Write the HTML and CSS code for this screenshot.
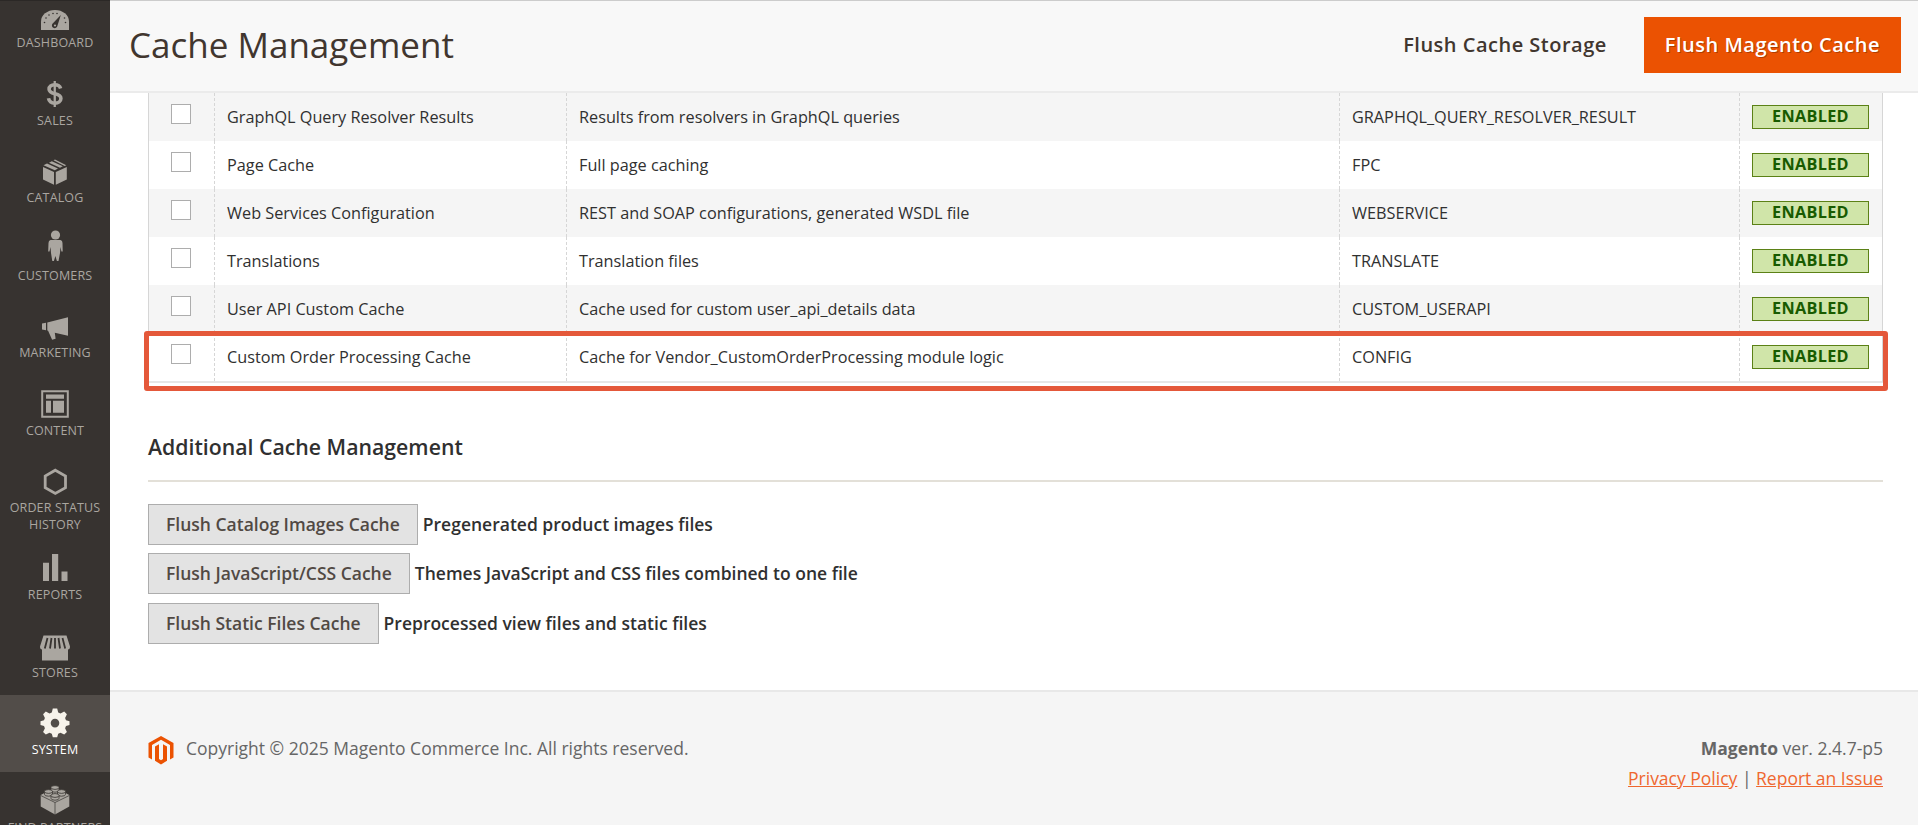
FILE: index.html
```html
<!DOCTYPE html>
<html lang="en">
<head>
<meta charset="utf-8">
<title>Cache Management</title>
<link rel="stylesheet" href="styles.css">
</head>
<body>
<div class="app">
<nav class="menu">
  <a class="item"><svg class="icon" viewBox="0 0 32 34"><path d="M2 30V21.500a14 11.500 0 0 1 28 0v8.500z"/><g class="cut"><circle cx="5.500" cy="22.500" r=".8"/><circle cx="7" cy="18" r=".8"/><circle cx="10" cy="15" r=".8"/><circle cx="14" cy="13.500" r=".8"/><circle cx="18" cy="13.500" r=".8"/><circle cx="26.500" cy="22.500" r=".8"/><circle cx="25.500" cy="18" r=".8"/><path d="M21.800 15l-7.600 8a2.800 2.800 0 1 0 4.300 2.500z"/></g><circle cx="16" cy="25.500" r="1.100"/></svg><span class="label">Dashboard</span></a>
  <a class="item"><svg class="icon" viewBox="0 0 32 34"><path class="stroke" d="M21.600 11.500C20.800 8.800 18.600 7.800 15.600 7.800c-3.200 0-5.500 1.600-5.500 4.400 0 6.200 11.800 3 11.800 9.200 0 3-2.600 4.700-6 4.700-3.600 0-5.800-1.600-6.400-4.900" stroke-width="3.600"/><path d="M14.600 4h2.300v26h-2.300z"/></svg><span class="label">Sales</span></a>
  <a class="item"><svg class="icon" viewBox="0 0 32 34"><path d="M4 12l11 5v12.800L4 24.500zM16.800 17l11-5v12.500l-11 5.300zM4.500 10.300L8 8.600l11 5-3.200 1.700zM10 7.700l2.800-1.400 11 5-2.800 1.400zM14.500 5.300L16 4.500l11.300 5.800-1.700.8z"/></svg><span class="label">Catalog</span></a>
  <a class="item"><svg class="icon" viewBox="0 0 32 34"><circle cx="16.500" cy="3" r="4.600"/><path d="M11.500 8h10q2 .5 2 3l.2 8.500h-1.300L21.500 15l-.5 6-1.500 8h-1.600l-1.500-5-1.500 5h-1.600L12 21l-.5-6-1 4.500H9.200L9.500 11q0-2.500 2-3z"/></svg><span class="label">Customers</span></a>
  <a class="item"><svg class="icon" viewBox="0 0 32 34"><path d="M3 13.500l4-.8v7.500l-4-.8zM8.300 12.400L29 7.300v18.400l-13.200-3 .8 6-3.500 1-4-9-.8-.3z"/></svg><span class="label">Marketing</span></a>
  <a class="item"><svg class="icon" viewBox="0 0 32 34"><path class="stroke" d="M3.200 4.200h25.600v25.600H3.200z" stroke-width="2"/><path d="M7 7.500h18v4.300H7zM7 13.800h5v12H7zM14 13.800h11v12H14z"/></svg><span class="label">Content</span></a>
  <a class="item tall"><svg class="icon" viewBox="0 0 32 34"><path class="stroke" d="M16.300 5.200L26.500 11v11.600l-10.200 5.900L6.200 22.600V11z" stroke-width="2.800"/></svg><span class="label">Order Status<br>History</span></a>
  <a class="item"><svg class="icon" viewBox="0 0 32 34"><path d="M4 10.800h6V29H4zM13 2h6.200v27H13zM22.500 19.500h6V29h-6z"/></svg><span class="label">Reports</span></a>
  <a class="item"><svg class="icon" viewBox="0 0 32 34"><path d="M4.500 6.500h23L31 17.500q0 3-2 3v11H3v-11q-2 0-2-3z"/><path class="slits" d="M8.500 9L5.800 19.500M12.500 9l-1.500 10.500M16 9v10.500M19.500 9l1.500 10.500M23.500 9l2.700 10.500"/></svg><span class="label">Stores</span></a>
  <a class="item active"><svg class="icon" viewBox="0 0 32 34"><path fill-rule="evenodd" d="M13.800 1.500h4.400l1 4 2.300.9 3.700-1.800 2.700 2.700-1.800 3.700.9 2.300 3.500 1v3.600l-3.500 1-.9 2.300 1.800 3.700-2.700 2.700-3.700-1.800-2.300.9-1 3.600h-4.400l-1-3.600-2.300-.9-3.700 1.800-2.700-2.700 1.800-3.700-.9-2.300-3.500-1v-3.600l3.500-1 .9-2.300-1.800-3.700 2.700-2.700 3.700 1.800 2.300-.9zM16 11.800a4.300 4.300 0 1 0 0 8.600 4.300 4.300 0 0 0 0-8.600z"/></svg><span class="label">System</span></a>
  <a class="item"><svg class="icon" viewBox="0 0 32 34"><path d="M1.700 11L16 3.500 30.300 11v11.500L16 30.500 1.700 22.500z"/><path class="seam" d="M1.700 11.500L16 18.500l14.300-7M16 18.500v12"/><g class="stud"><path d="M12 3.500v2.800a4 1.900 0 0 0 8 0V3.500M5.500 7.500v2.800a4 1.900 0 0 0 8 0V7.500M18.500 7.500v2.800a4 1.900 0 0 0 8 0V7.500M12 11.500v2.800a4 1.900 0 0 0 8 0V11.500"/><ellipse cx="16" cy="3.500" rx="4" ry="1.900"/><ellipse cx="9.500" cy="7.500" rx="4" ry="1.900"/><ellipse cx="22.500" cy="7.500" rx="4" ry="1.900"/><ellipse cx="16" cy="11.500" rx="4" ry="1.900"/></g></svg><span class="label">Find Partners</span></a>
</nav>
<div class="page">
  <header class="header">
    <h1 class="title">Cache Management</h1>
    <button class="btn-link">Flush Cache Storage</button>
    <button class="btn-primary">Flush Magento Cache</button>
  </header>
  <main class="main">
    <div class="grid-wrap">
    <div class="grid">
      <div class="row"><div class="cell"><i class="check"></i></div><div class="cell">GraphQL Query Resolver Results</div><div class="cell">Results from resolvers in GraphQL queries</div><div class="cell">GRAPHQL_QUERY_RESOLVER_RESULT</div><div class="cell"><span class="badge">Enabled</span></div></div>
      <div class="row"><div class="cell"><i class="check"></i></div><div class="cell">Page Cache</div><div class="cell">Full page caching</div><div class="cell">FPC</div><div class="cell"><span class="badge">Enabled</span></div></div>
      <div class="row"><div class="cell"><i class="check"></i></div><div class="cell">Web Services Configuration</div><div class="cell">REST and SOAP configurations, generated WSDL file</div><div class="cell">WEBSERVICE</div><div class="cell"><span class="badge">Enabled</span></div></div>
      <div class="row"><div class="cell"><i class="check"></i></div><div class="cell">Translations</div><div class="cell">Translation files</div><div class="cell">TRANSLATE</div><div class="cell"><span class="badge">Enabled</span></div></div>
      <div class="row"><div class="cell"><i class="check"></i></div><div class="cell">User API Custom Cache</div><div class="cell">Cache used for custom user_api_details data</div><div class="cell">CUSTOM_USERAPI</div><div class="cell"><span class="badge">Enabled</span></div></div>
      <div class="row"><div class="cell"><i class="check"></i></div><div class="cell">Custom Order Processing Cache</div><div class="cell">Cache for Vendor_CustomOrderProcessing module logic</div><div class="cell">CONFIG</div><div class="cell"><span class="badge">Enabled</span></div></div>
    </div>
    <div class="highlight"></div>
    </div>
    <h2 class="subtitle">Additional Cache Management</h2>
    <div class="actions">
      <p class="action"><button class="btn">Flush Catalog Images Cache</button><span>Pregenerated product images files</span></p>
      <p class="action"><button class="btn">Flush JavaScript/CSS Cache</button><span>Themes JavaScript and CSS files combined to one file</span></p>
      <p class="action"><button class="btn">Flush Static Files Cache</button><span>Preprocessed view files and static files</span></p>
    </div>
  </main>
  <footer class="footer">
    <svg class="logo" viewBox="0 0 26 30"><path d="M13 1l12.500 7v14.500L22 24.500V10l-9-5.200L4 10v14.500L.5 22.500V8z"/><path d="M7 11.500l4-2.200v14.800l2 1.200 2-1.200V9.300l4 2.200v14.300L13 29.500l-6-3.700z"/></svg>
    <p class="copy">Copyright © 2025 Magento Commerce Inc. All rights reserved.</p>
    <div class="legal"><p class="line"><strong>Magento</strong> ver. 2.4.7-p5</p><p class="line"><a class="link">Privacy Policy</a> | <a class="link">Report an Issue</a></p></div>
  </footer>
</div>
</div>
</body>
</html>
```

FILE: styles.css
```css
* { box-sizing: border-box; }
body {
  margin: 0;
  background: #fff;
  color: #303030;
  font-family: "Open Sans", "Noto Sans", sans-serif;
  font-size: 16.25px;
}
h1, h2, p { margin: 0; }
button { font-family: inherit; }
.app { display: flex; height: 825px; overflow: hidden; }

.menu {
  flex: none;
  width: 110px;
  height: 825px;
  overflow: hidden;
  background: #373330;
  box-shadow: inset 0 1px 0 #2b2826;
}
.item {
  display: flex;
  flex-direction: column;
  align-items: center;
  height: 77.5px;
  padding-top: 12px;
  color: #aaa6a0;
  font-size: 12.5px;
  line-height: 17px;
  letter-spacing: .15px;
  text-align: center;
  text-transform: uppercase;
}
.item:first-child { margin-top: -12.5px; }
.item.tall { height: 87px; }
.item.active {
  background: #524d49;
  color: #fff;
}
.icon { flex: none; width: 32px; height: 34px; margin-bottom: .6px; overflow: visible; fill: currentColor; }
.active .icon { color: #f7f3eb; }
.cut { fill: #373330; }
.stroke { fill: none; stroke: currentColor; }
.slits { fill: none; stroke: #373330; stroke-width: 1.8; }
.seam { fill: none; stroke: #373330; stroke-width: .7; }
.stud { stroke: #373330; stroke-width: .8; }
.label { white-space: nowrap; }

.page { flex: 1; display: flex; flex-direction: column; }
.header {
  display: flex;
  align-items: center;
  height: 93px;
  padding: 0 17px 3px 19px;
  background: #f8f8f8;
  border-top: 1px solid #ccc;
  border-bottom: 2px solid #ebebeb;
}
.title {
  flex: 1;
  color: #41362f;
  font-size: 35px;
  font-weight: 400;
  line-height: 42px;
}
.btn-link, .btn-primary {
  height: 56px;
  border: 0;
  padding: 0 21px;
  font-size: 20px;
  font-weight: 600;
  letter-spacing: .5px;
}
.btn-link { margin-right: 16px; background: transparent; color: #41362f; }
.btn-primary { background: #eb5202; color: #fff; text-shadow: 1px 1px 0 rgba(0, 0, 0, .25); }

.main { padding: 0 35px 0 38px; }
.grid-wrap { position: relative; }
.grid {
  border: 1px solid #d6d6d6;
  border-top: 0;
  border-bottom: 2px solid #e6e6e6;
}
.row {
  display: grid;
  grid-template-columns: 65px 352px 773px 400px 1fr;
  height: 48.15px;
}
.row:first-child { height: 47.6px; }
.row:first-child .cell { padding-top: 11.5px; }
.row:nth-child(odd) { background: #f5f5f5; }
.cell { padding: 12px 12px 0; line-height: 24px; white-space: nowrap; }
.cell + .cell { border-left: 1px dashed #d6d6d6; }
.check {
  display: block;
  width: 20px;
  height: 20px;
  margin: -1px 0 0 10px;
  border: 1px solid #adadad;
  background: #fff;
}
.badge {
  display: block;
  width: 117px;
  height: 24px;
  border: 1px solid #5b8116;
  background: #d0e5a9;
  color: #185b00;
  font-weight: 700;
  line-height: 21px;
  letter-spacing: .3px;
  text-align: center;
  text-transform: uppercase;
}
.highlight {
  position: absolute;
  left: -4px;
  right: -5px;
  bottom: -8px;
  height: 60px;
  border: 5px solid #e4583a;
  border-radius: 3px;
}
.subtitle {
  margin-top: 48px;
  padding-bottom: 16.5px;
  border-bottom: 2px solid #e3e0d8;
  font-size: 21.25px;
  font-weight: 600;
  line-height: 32px;
}
.actions { padding-top: 22px; }
.action {
  display: flex;
  align-items: center;
  gap: 5px;
  height: 41px;
  margin-bottom: 8.5px;
  font-size: 17.5px;
  font-weight: 600;
}
.action span { padding-bottom: 1px; }
.btn {
  height: 41px;
  padding: 0 17px 1px;
  border: 1px solid #adadad;
  background: #e3e3e3;
  color: #514943;
  font-size: 17.5px;
  font-weight: 600;
}
.footer {
  display: flex;
  align-items: flex-start;
  flex: 1;
  margin-top: 38px;
  padding: 41px 35px 0 38px;
  border-top: 2px solid #e8e8e8;
  background: #f5f5f5;
  color: #666;
  font-size: 17.5px;
  line-height: 30px;
}
.logo { width: 26px; height: 30px; margin: 2px 12px 0 0; fill: #eb5202; }
.copy { flex: 1; }
.legal { text-align: right; }
.link { color: #ef672f; text-decoration: underline; }
```
